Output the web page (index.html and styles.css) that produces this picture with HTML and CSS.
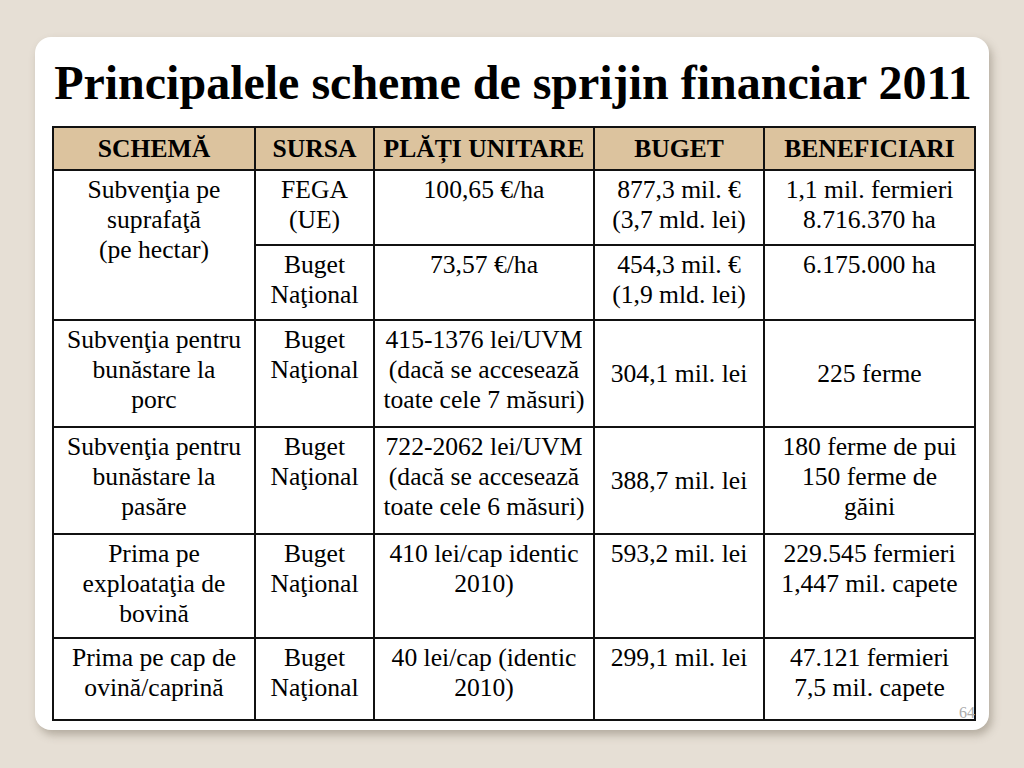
FILE: index.html
```html
<!DOCTYPE html>
<html>
<head>
<meta charset="utf-8">
<link rel="stylesheet" href="styles.css">
</head>
<body>
<div class="slide">
  <h1 class="title">Principalele scheme de sprijin financiar 2011</h1>
  <table class="grid">
    <colgroup>
      <col class="c1"><col class="c2"><col class="c3"><col class="c4"><col class="c5">
    </colgroup>
    <thead>
      <tr class="head"><th>SCHEMĂ</th><th>SURSA</th><th>PLĂȚI UNITARE</th><th>BUGET</th><th>BENEFICIARI</th></tr>
    </thead>
    <tbody>
      <tr class="r1a">
        <td rowspan="2">Subvenţia pe<br>suprafaţă<br>(pe hectar)</td>
        <td>FEGA<br>(UE)</td>
        <td>100,65 €/ha</td>
        <td>877,3 mil. €<br>(3,7 mld. lei)</td>
        <td>1,1 mil. fermieri<br>8.716.370 ha</td>
      </tr>
      <tr class="r1b">
        <td>Buget<br>Naţional</td>
        <td>73,57 €/ha</td>
        <td>454,3 mil. €<br>(1,9 mld. lei)</td>
        <td>6.175.000 ha</td>
      </tr>
      <tr class="r2">
        <td>Subvenţia pentru<br>bunăstare la<br>porc</td>
        <td>Buget<br>Naţional</td>
        <td>415-1376 lei/UVM<br>(dacă se accesează<br>toate cele 7 măsuri)</td>
        <td class="mid">304,1 mil. lei</td>
        <td class="mid">225 ferme</td>
      </tr>
      <tr class="r3">
        <td>Subvenţia pentru<br>bunăstare la<br>pasăre</td>
        <td>Buget<br>Naţional</td>
        <td>722-2062 lei/UVM<br>(dacă se accesează<br>toate cele 6 măsuri)</td>
        <td class="mid">388,7 mil. lei</td>
        <td>180 ferme de pui<br>150 ferme de<br>găini</td>
      </tr>
      <tr class="r4">
        <td>Prima pe<br>exploataţia de<br>bovină</td>
        <td>Buget<br>Naţional</td>
        <td>410 lei/cap identic<br>2010)</td>
        <td>593,2 mil. lei</td>
        <td>229.545 fermieri<br>1,447 mil. capete</td>
      </tr>
      <tr class="r5">
        <td>Prima pe cap de<br>ovină/caprină</td>
        <td>Buget<br>Naţional</td>
        <td>40 lei/cap (identic<br>2010)</td>
        <td>299,1 mil. lei</td>
        <td>47.121 fermieri<br>7,5 mil. capete</td>
      </tr>
    </tbody>
  </table>
  <span class="page-num">64</span>
</div>
</body>
</html>
```

FILE: styles.css
```css
html, body {
  margin: 0;
  padding: 0;
}
body {
  background: #e6dfd5;
  width: 1024px;
  height: 768px;
  overflow: hidden;
  font-family: "Liberation Serif", "Times New Roman", serif;
  color: #000;
}
.slide {
  position: relative;
  margin: 37px 0 0 35px;
  width: 954px;
  height: 693px;
  background: #fff;
  border-radius: 16px;
  box-shadow: 3px 5px 8px rgba(120, 110, 95, 0.45);
  padding: 0 15px 0 17px;
  box-sizing: border-box;
}
.title {
  margin: 0;
  padding-top: 18px;
  height: 89px;
  box-sizing: border-box;
  font-family: "Liberation Serif", "Times New Roman", serif;
  font-size: 48px;
  line-height: 56px;
  font-weight: bold;
  text-align: center;
  white-space: nowrap;
}
.grid {
  border-collapse: collapse;
  table-layout: fixed;
  width: 922px;
  font-family: "Liberation Serif", "Times New Roman", serif;
  font-size: 25.6px;
  line-height: 30px;
}
.c1 { width: 202px; }
.c2 { width: 119px; }
.c3 { width: 220px; }
.c4 { width: 170px; }
.c5 { width: 211px; }
.grid th, .grid td {
  font-family: "Liberation Serif", "Times New Roman", serif;
  border: 2px solid #111;
  text-align: center;
  vertical-align: top;
  padding: 4px 0 0;
  white-space: nowrap;
  box-sizing: border-box;
}
.grid th {
  background: #dcc39e;
  font-size: 25.6px;
  font-weight: bold;
  vertical-align: middle;
  padding: 0;
}
.grid td.mid { vertical-align: middle; padding-top: 0; }
.head { height: 43px; }
.r1a { height: 75px; }
.r1b { height: 75px; }
.r2 { height: 107px; }
.r3 { height: 107px; }
.r4 { height: 104px; }
.r5 { height: 82px; }
.page-num {
  position: absolute;
  right: 14px;
  bottom: 9px;
  font-size: 16px;
  line-height: 16px;
  color: #ababab;
  font-family: "Liberation Serif", "Times New Roman", serif;
}
```
